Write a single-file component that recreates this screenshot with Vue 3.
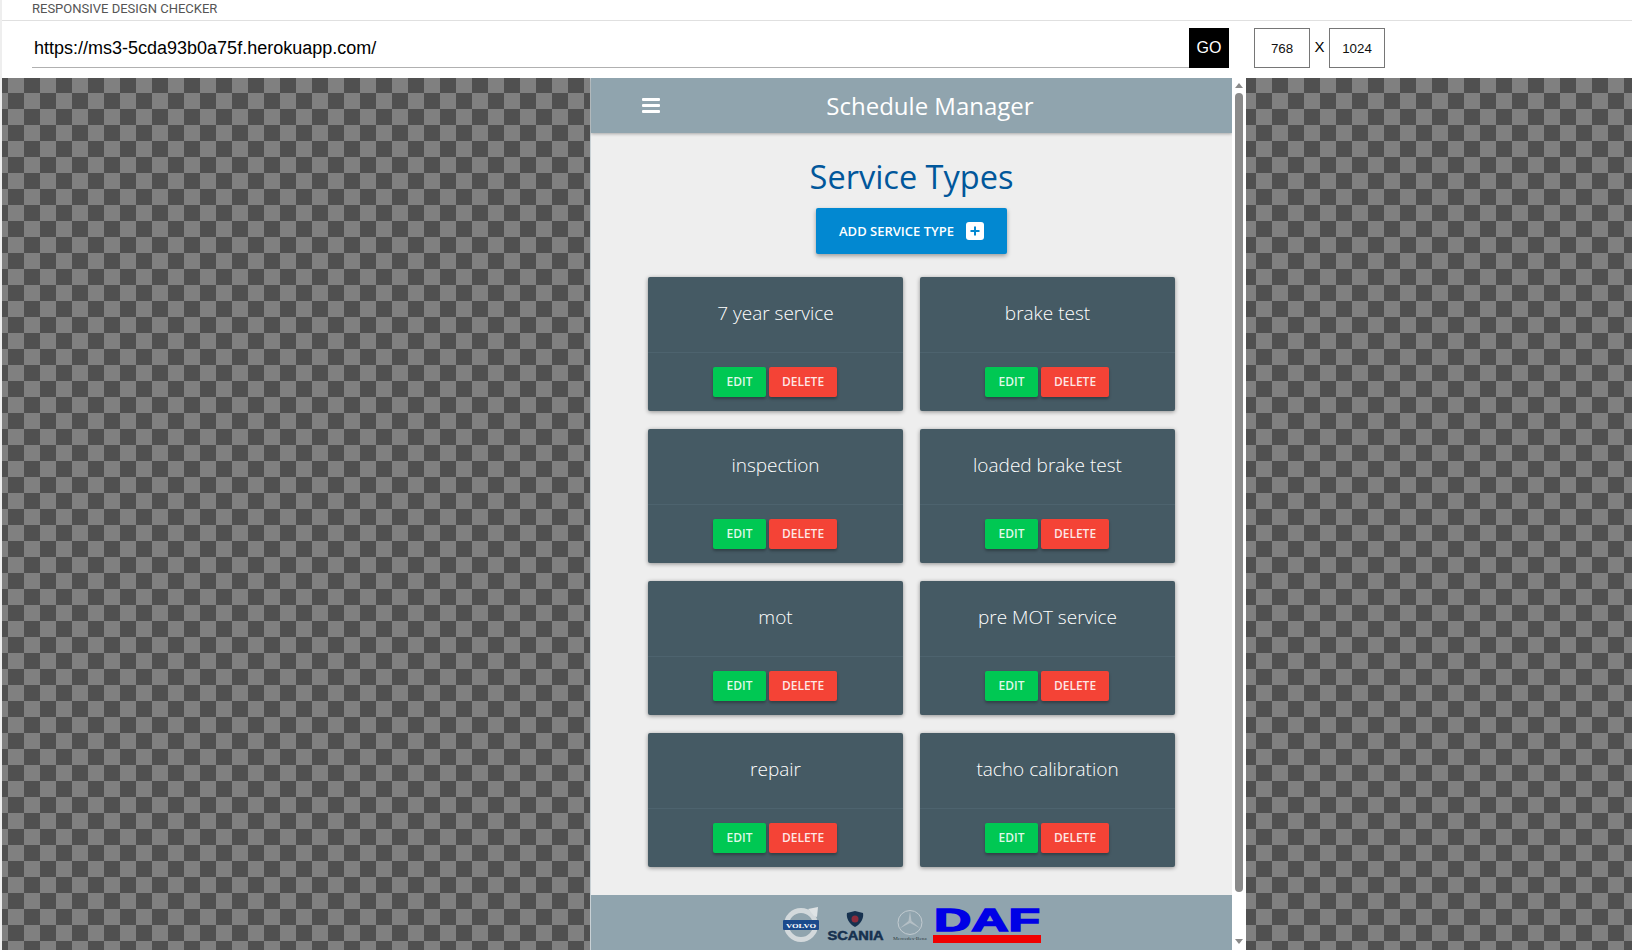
<script setup>
const serviceTypes = [
  '7 year service',
  'brake test',
  'inspection',
  'loaded brake test',
  'mot',
  'pre MOT service',
  'repair',
  'tacho calibration',
]
</script>

<template>
  <div class="checker">
    <div class="label-row">RESPONSIVE DESIGN CHECKER</div>
    <div class="url-row">
      <div class="url">https://ms3-5cda93b0a75f.herokuapp.com/</div>
      <div class="go">GO</div>
      <div class="size-box">768</div>
      <div class="times">X</div>
      <div class="size-box">1024</div>
    </div>

    <div class="stage">
      <div class="frame">
        <div class="page">
          <nav class="navbar">
            <svg class="burger" width="18" height="15" viewBox="0 0 18 15">
              <rect y="0" width="18" height="3" rx="1" fill="#fff" />
              <rect y="6" width="18" height="3" rx="1" fill="#fff" />
              <rect y="12" width="18" height="3" rx="1" fill="#fff" />
            </svg>
            <div class="brand">Schedule Manager</div>
          </nav>

          <main class="content">
            <h1 class="heading">Service Types</h1>
            <a class="add-btn">
              ADD SERVICE TYPE
              <svg width="18" height="18" viewBox="0 0 18 18">
                <rect width="18" height="18" rx="3" fill="#fff" />
                <path d="M9 4.5v9M4.5 9h9" stroke="#0288d1" stroke-width="2" />
              </svg>
            </a>
            <div class="cards">
              <div v-for="name in serviceTypes" :key="name" class="card">
                <div class="card-title">{{ name }}</div>
                <div class="card-action">
                  <a class="btn edit">EDIT</a>
                  <a class="btn delete">DELETE</a>
                </div>
              </div>
            </div>
          </main>

          <footer class="footer">
            <svg class="logo volvo-logo" width="36" height="36" viewBox="0 0 36 36">
              <circle cx="18" cy="18" r="14.500" fill="none" stroke="#d3d9dc" stroke-width="5" />
              <path d="M25 2l10-2-1 10-3-1-4-5z" fill="#dfe3e5" />
              <rect x="0" y="13" width="36" height="10" rx="1" fill="#1b4a8c" />
              <text x="18" y="20.500" text-anchor="middle" class="volvo" textLength="30" lengthAdjust="spacingAndGlyphs">VOLVO</text>
            </svg>
            <svg class="logo scania" width="58" height="31" viewBox="0 0 58 31">
              <path d="M20 2l8-2 8 2c1 5-2 11-8 14-6-3-9-9-8-14z" fill="#16314f" />
              <circle cx="28" cy="8" r="3.500" fill="#8c2c3c" />
              <text x="28.500" y="29" text-anchor="middle" class="scania-text" textLength="56" lengthAdjust="spacingAndGlyphs">SCANIA</text>
            </svg>
            <svg class="logo merc" width="36" height="31" viewBox="0 0 36 31">
              <circle cx="18" cy="12.500" r="12" fill="none" stroke="#c2cbd0" stroke-width="1" />
              <path d="M18 1l1.500 10 9 7.500-10.500-5.500-10.500 5.500 9-7.500z" fill="#b4bfc5" />
              <text x="18" y="29.500" text-anchor="middle" class="merc-text" textLength="34" lengthAdjust="spacingAndGlyphs">Mercedes-Benz</text>
            </svg>
            <svg class="logo daf" width="108" height="44" viewBox="0 0 108 44">
              <text x="54" y="31.500" text-anchor="middle" class="daf-text" textLength="106" lengthAdjust="spacingAndGlyphs">DAF</text>
              <rect y="36" width="108" height="8" fill="#f00000" />
            </svg>
          </footer>
        </div>

        <div class="scrollbar">
          <span class="arrow up"></span>
          <span class="thumb"></span>
          <span class="arrow down"></span>
        </div>
      </div>
    </div>
  </div>
</template>

<style>
html,
body {
  margin: 0;
  overflow: hidden;
  background: #fff;
}
</style>

<style scoped>
.checker {
  width: 1632px;
  height: 950px;
  box-sizing: border-box;
  border-left: 2px solid #eeeeee;
  display: flex;
  flex-direction: column;
  overflow: hidden;
  background: #fff;
}
.label-row {
  height: 21px;
  box-sizing: border-box;
  padding: 1px 0 0 30px;
  border-bottom: 1px solid #e0e0e0;
  font: 13px/15px Roboto, sans-serif;
  color: #555;
}
.url-row {
  height: 57px;
  box-sizing: border-box;
  padding: 7px 0 0 30px;
  display: flex;
  align-items: flex-start;
}
.url {
  width: 1157px;
  height: 40px;
  box-sizing: border-box;
  border-bottom: 1px solid #b0b0b0;
  padding-left: 2px;
  font: 18px/40px "Liberation Sans", Arial, sans-serif;
  color: #000;
}
.go {
  width: 40px;
  height: 40px;
  background: #000;
  color: #fff;
  text-align: center;
  font: 16px/40px "Liberation Sans", Arial, sans-serif;
  margin-right: 25px;
}
.size-box {
  width: 56px;
  height: 40px;
  box-sizing: border-box;
  border: 1px solid #767676;
  text-align: center;
  font: 13.33px/40px "Liberation Sans", Arial, sans-serif;
  color: #111;
}
.times {
  width: 19px;
  text-align: center;
  font: 15px/37px "Liberation Sans", Arial, sans-serif;
  color: #000;
}
.stage {
  flex: 1;
  min-height: 0;
  padding-left: 588px;
  background-color: #808080;
  background-image: conic-gradient(#808080 25%, #505050 0 50%, #808080 0 75%, #505050 0);
  background-size: 32px 32px;
  background-position: -10px -1px;
}
.frame {
  width: 656px;
  height: 872px;
  display: flex;
  overflow: hidden;
}
.page {
  width: 642px;
  flex: none;
  background: #eeeeee;
  border-left: 1px solid #c8d0d4;
  box-sizing: border-box;
  font-family: "Open Sans", sans-serif;
}
.navbar {
  height: 55px;
  background: #90a4ae;
  box-shadow: 0 1px 3px rgba(0, 0, 0, 0.3);
  display: flex;
  align-items: center;
  padding-left: 51px;
  position: relative;
}
.brand {
  width: 540px;
  text-align: center;
  font-size: 24px;
  color: #fff;
}
.content {
  height: 762px;
  box-sizing: border-box;
  padding-top: 22px;
  display: flex;
  flex-direction: column;
  align-items: center;
}
.heading {
  margin: 0 0 9px;
  font-size: 32.500px;
  line-height: 44px;
  font-weight: 400;
  color: #01579b;
}
.add-btn {
  width: 191px;
  height: 46px;
  background: #0288d1;
  border-radius: 2px;
  box-shadow: 0 2px 4px rgba(0, 0, 0, 0.35);
  color: #fff;
  font-size: 13px;
  font-weight: 600;
  display: flex;
  align-items: center;
  justify-content: center;
  gap: 12px;
}
.cards {
  margin-top: 23px;
  display: grid;
  grid-template-columns: 255px 255px;
  column-gap: 17px;
  row-gap: 18px;
}
.card {
  height: 134px;
  background: #455a64;
  border-radius: 2px;
  box-shadow: 0 1px 4px rgba(0, 0, 0, 0.4);
  display: flex;
  flex-direction: column;
}
.card-title {
  height: 76px;
  box-sizing: border-box;
  padding-top: 23px;
  text-align: center;
  font-size: 19px;
  line-height: 27px;
  font-weight: 300;
  color: #fff;
  border-bottom: 1px solid #4d636e;
}
.card-action {
  flex: 1;
  display: flex;
  justify-content: center;
  align-items: center;
  gap: 3px;
  padding-right: 1px;
}
.btn {
  height: 30px;
  border-radius: 2px;
  box-shadow: 0 2px 3px rgba(0, 0, 0, 0.3);
  color: rgba(255, 255, 255, 0.88);
  font-size: 12px;
  font-weight: 600;
  line-height: 30px;
  text-align: center;
}
.edit {
  width: 53px;
  background: #00c853;
}
.delete {
  width: 68px;
  background: #f44336;
}
.footer {
  height: 60px;
  background: #90a4ae;
  display: flex;
  align-items: flex-start;
  padding: 12px 0 0 192px;
}
.logo {
  flex: none;
}
.volvo-logo {
  margin-right: 8px;
}
.scania {
  margin-top: 4px;
  margin-right: 7px;
}
.merc {
  margin-top: 3px;
  margin-right: 5px;
}
.daf {
  margin-top: -8px;
}
.volvo {
  font: 700 7px "Liberation Serif", serif;
  fill: #fff;
}
.scania-text {
  font: 700 12px "Liberation Sans", sans-serif;
  fill: #16314f;
  stroke: #16314f;
  stroke-width: 0.500px;
}
.merc-text {
  font: 4px "Liberation Serif", serif;
  fill: #2f3c42;
}
.daf-text {
  font: 700 32px "Liberation Sans", sans-serif;
  fill: #0000e6;
  stroke: #0000e6;
  stroke-width: 1.500px;
}
.scrollbar {
  width: 14px;
  height: 100%;
  background: #fff;
  position: relative;
}
.thumb {
  position: absolute;
  left: 3px;
  top: 15px;
  width: 8px;
  height: 799px;
  border-radius: 4px;
  background: #8a8a8a;
}
.arrow {
  position: absolute;
  left: 3px;
  width: 0;
  height: 0;
  border-left: 4px solid transparent;
  border-right: 4px solid transparent;
}
.up {
  top: 5px;
  border-bottom: 5px solid #8a8a8a;
}
.down {
  bottom: 6px;
  border-top: 5px solid #8a8a8a;
}
</style>
